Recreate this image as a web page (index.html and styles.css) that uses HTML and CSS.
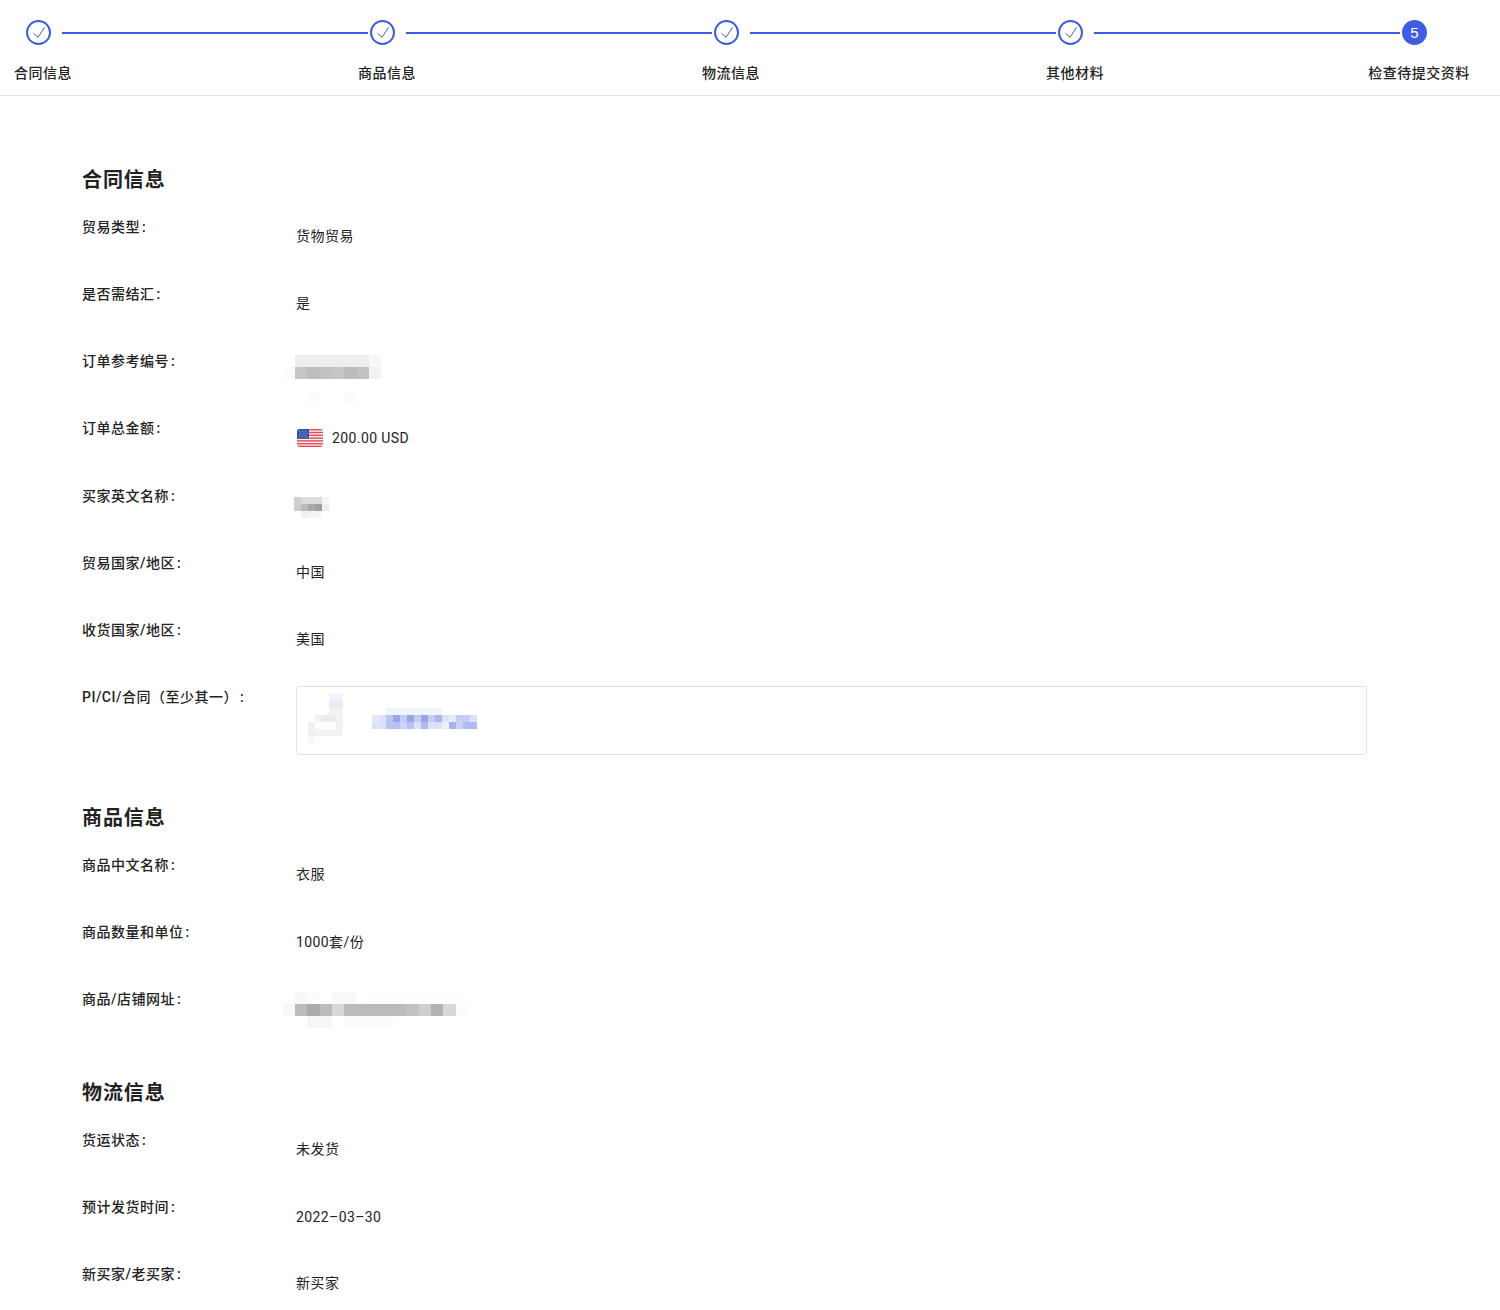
FILE: index.html
```html
<!DOCTYPE html>
<html lang="zh-CN">
<head>
<meta charset="utf-8">
<title>检查待提交资料</title>
<link rel="stylesheet" href="styles.css">
</head>
<body>
<header class="stepper">
  <div class="step">
    <div class="step-head">
      <svg class="step-icon" viewBox="0 0 25 25"><circle cx="12.5" cy="12.5" r="11.5" fill="none" stroke="#3f5ce3" stroke-width="2"/><path d="M7.5 13.3l4.5 4 6.5-10" fill="none" stroke="#3f5ce3" stroke-width="1"/></svg>
      <span class="step-line"></span>
    </div>
    <div class="step-label"><span>合同信息</span></div>
  </div>
  <div class="step">
    <div class="step-head">
      <svg class="step-icon" viewBox="0 0 25 25"><circle cx="12.5" cy="12.5" r="11.5" fill="none" stroke="#3f5ce3" stroke-width="2"/><path d="M7.5 13.3l4.5 4 6.5-10" fill="none" stroke="#3f5ce3" stroke-width="1"/></svg>
      <span class="step-line"></span>
    </div>
    <div class="step-label"><span>商品信息</span></div>
  </div>
  <div class="step">
    <div class="step-head">
      <svg class="step-icon" viewBox="0 0 25 25"><circle cx="12.5" cy="12.5" r="11.5" fill="none" stroke="#3f5ce3" stroke-width="2"/><path d="M7.5 13.3l4.5 4 6.5-10" fill="none" stroke="#3f5ce3" stroke-width="1"/></svg>
      <span class="step-line"></span>
    </div>
    <div class="step-label"><span>物流信息</span></div>
  </div>
  <div class="step">
    <div class="step-head">
      <svg class="step-icon" viewBox="0 0 25 25"><circle cx="12.5" cy="12.5" r="11.5" fill="none" stroke="#3f5ce3" stroke-width="2"/><path d="M7.5 13.3l4.5 4 6.5-10" fill="none" stroke="#3f5ce3" stroke-width="1"/></svg>
      <span class="step-line"></span>
    </div>
    <div class="step-label"><span>其他材料</span></div>
  </div>
  <div class="step step-last">
    <div class="step-head">
      <span class="step-num">5</span>
    </div>
    <div class="step-label"><span>检查待提交资料</span></div>
  </div>
</header>

<main class="page">
  <section class="section">
    <h2 class="section-title">合同信息</h2>
    <div class="row"><div class="label">贸易类型<span class="colon">:</span></div><div class="value">货物贸易</div></div>
    <div class="row"><div class="label">是否需结汇<span class="colon">:</span></div><div class="value">是</div></div>
    <div class="row"><div class="label">订单参考编号<span class="colon">:</span></div>
      <div class="value-blur">
        <svg class="mosaic mosaic-ref" viewBox="0 0 100 48">
          <rect x="12" y="0" width="74" height="12" fill="#eeeeee"/>
          <rect x="86" y="0" width="12" height="12" fill="#f8f8f8"/>
          <rect x="0" y="12" width="12" height="12" fill="#fbfbfb"/>
          <rect x="12" y="12" width="12" height="12" fill="#c6c6c6"/>
          <rect x="24" y="12" width="12" height="12" fill="#bdbdbd"/>
          <rect x="36" y="12" width="13" height="12" fill="#c2c2c2"/>
          <rect x="49" y="12" width="12" height="12" fill="#c6c6c6"/>
          <rect x="61" y="12" width="13" height="12" fill="#bcbcbc"/>
          <rect x="74" y="12" width="12" height="12" fill="#c2c2c2"/>
          <rect x="86" y="12" width="12" height="12" fill="#f2f2f2"/>
          <rect x="24" y="36" width="12" height="12" fill="#fcfcfc"/>
          <rect x="61" y="36" width="12" height="12" fill="#fcfcfc"/>
        </svg>
      </div>
    </div>
    <div class="row"><div class="label">订单总金额<span class="colon">:</span></div>
      <div class="value value-num value-amount">
        <svg class="flag" viewBox="0 0 26 18">
          <defs><clipPath id="flag-clip"><rect width="26" height="18" rx="3"/></clipPath></defs>
          <g clip-path="url(#flag-clip)">
            <rect width="26" height="18" fill="#f7f3f3"/>
            <g fill="#e3495a">
              <rect y="0" width="26" height="1.4"/><rect y="2.8" width="26" height="1.4"/><rect y="5.6" width="26" height="1.4"/><rect y="8.4" width="26" height="1.4"/><rect y="11.2" width="26" height="1.4"/><rect y="14" width="26" height="1.4"/><rect y="16.6" width="26" height="1.4"/>
            </g>
            <rect width="12" height="9.8" fill="#2f55a4"/>
            <g fill="#c9d4ee"><circle cx="2.5" cy="2" r=".5"/><circle cx="5.5" cy="2" r=".5"/><circle cx="8.5" cy="2" r=".5"/><circle cx="4" cy="4" r=".5"/><circle cx="7" cy="4" r=".5"/><circle cx="10" cy="4" r=".5"/><circle cx="2.5" cy="6" r=".5"/><circle cx="5.5" cy="6" r=".5"/><circle cx="8.5" cy="6" r=".5"/><circle cx="4" cy="8" r=".5"/><circle cx="7" cy="8" r=".5"/><circle cx="10" cy="8" r=".5"/></g>
          </g>
        </svg>
        <span>200.00 USD</span>
      </div>
    </div>
    <div class="row"><div class="label">买家英文名称<span class="colon">:</span></div>
      <div class="value-blur">
        <svg class="mosaic mosaic-buyer" viewBox="0 0 40 26">
          <rect x="0" y="0" width="7" height="7" fill="#d0d0d0"/>
          <rect x="7" y="0" width="21" height="7" fill="#dddddd"/>
          <rect x="28" y="0" width="7" height="7" fill="#f5f5f5"/>
          <rect x="0" y="7" width="7" height="7" fill="#cccccc"/>
          <rect x="7" y="7" width="7" height="7" fill="#bbbbbb"/>
          <rect x="14" y="7" width="7" height="7" fill="#aaaaaa"/>
          <rect x="21" y="7" width="7" height="7" fill="#a0a0a0"/>
          <rect x="28" y="7" width="7" height="7" fill="#eeeeee"/>
          <rect x="7" y="14" width="7" height="7" fill="#f0f0f0"/>
          <rect x="14" y="14" width="7" height="7" fill="#f4f4f4"/>
          <rect x="21" y="14" width="7" height="7" fill="#f7f7f7"/>
        </svg>
      </div>
    </div>
    <div class="row"><div class="label">贸易国家/地区<span class="colon">:</span></div><div class="value">中国</div></div>
    <div class="row"><div class="label">收货国家/地区<span class="colon">:</span></div><div class="value">美国</div></div>
    <div class="row"><div class="label">PI/CI/合同（至少其一）<span class="colon">:</span></div>
      <div class="file-box">
        <svg class="mosaic mosaic-file" viewBox="0 0 182 56">
          <g transform="translate(6 0)">
            <rect x="21" y="7" width="14" height="7" fill="#f1f3fb"/>
            <rect x="21" y="14" width="14" height="7" fill="#e8ecf8"/>
            <rect x="21" y="21" width="14" height="7" fill="#f3f2ee"/>
            <rect x="7" y="28" width="28" height="7" fill="#f2f2f2"/>
            <rect x="14" y="28" width="14" height="7" fill="#ececec"/>
            <rect x="0" y="35" width="7" height="14" fill="#f1f1f1"/>
            <rect x="7" y="42" width="21" height="7" fill="#f3f3f3"/>
            <rect x="28" y="35" width="7" height="14" fill="#f3f3f3"/>
            <rect x="0" y="49" width="7" height="7" fill="#f8f8f8"/>
          </g>
          <rect x="84" y="21" width="56" height="7" fill="#f3f5fd"/>
          <rect x="70" y="28" width="7" height="7" fill="#e5e8fa"/>
          <rect x="77" y="28" width="7" height="7" fill="#dde1f8"/>
          <rect x="84" y="28" width="7" height="7" fill="#bcc5f3"/>
          <rect x="91" y="28" width="7" height="7" fill="#98a4ec"/>
          <rect x="98" y="28" width="7" height="7" fill="#c5cdf5"/>
          <rect x="105" y="28" width="7" height="7" fill="#98a4ec"/>
          <rect x="112" y="28" width="7" height="7" fill="#c5cdf5"/>
          <rect x="119" y="28" width="7" height="7" fill="#98a4ec"/>
          <rect x="126" y="28" width="7" height="7" fill="#c5cdf5"/>
          <rect x="133" y="28" width="7" height="7" fill="#aab4f0"/>
          <rect x="140" y="28" width="7" height="7" fill="#dde1f8"/>
          <rect x="147" y="28" width="7" height="7" fill="#e8ebfb"/>
          <rect x="154" y="28" width="14" height="7" fill="#c5cdf5"/>
          <rect x="168" y="28" width="7" height="7" fill="#dde1f8"/>
          <rect x="70" y="35" width="14" height="7" fill="#dde1f8"/>
          <rect x="84" y="35" width="14" height="7" fill="#b8c1f2"/>
          <rect x="98" y="35" width="7" height="7" fill="#ccd2f6"/>
          <rect x="105" y="35" width="7" height="7" fill="#b8c1f2"/>
          <rect x="112" y="35" width="7" height="7" fill="#dde1f8"/>
          <rect x="119" y="35" width="7" height="7" fill="#b0baf0"/>
          <rect x="126" y="35" width="14" height="7" fill="#dde1f8"/>
          <rect x="140" y="35" width="7" height="7" fill="#eceefc"/>
          <rect x="147" y="35" width="7" height="7" fill="#a8b2ef"/>
          <rect x="154" y="35" width="7" height="7" fill="#ccd2f6"/>
          <rect x="161" y="35" width="14" height="7" fill="#b0baf0"/>
        </svg>
      </div>
    </div>
  </section>

  <section class="section">
    <h2 class="section-title">商品信息</h2>
    <div class="row"><div class="label">商品中文名称<span class="colon">:</span></div><div class="value">衣服</div></div>
    <div class="row"><div class="label">商品数量和单位<span class="colon">:</span></div><div class="value value-num">1000套/份</div></div>
    <div class="row"><div class="label">商品/店铺网址<span class="colon">:</span></div>
      <div class="value-blur">
        <svg class="mosaic mosaic-url" viewBox="0 0 200 36">
          <rect x="14" y="0" width="12" height="12" fill="#f8f8f8"/>
          <rect x="26" y="0" width="12" height="12" fill="#fcfcfc"/>
          <rect x="51" y="0" width="24" height="12" fill="#f9f9f9"/>
          <rect x="88" y="0" width="96" height="12" fill="#fdfdfd"/>
          <rect x="2" y="12" width="12" height="12" fill="#f8f8f8"/>
          <rect x="14" y="12" width="12" height="12" fill="#bcbcbc"/>
          <rect x="26" y="12" width="13" height="12" fill="#ababab"/>
          <rect x="39" y="12" width="12" height="12" fill="#bcbcbc"/>
          <rect x="51" y="12" width="12" height="12" fill="#d8d8d8"/>
          <rect x="63" y="12" width="62" height="12" fill="#bbbbbb"/>
          <rect x="125" y="12" width="13" height="12" fill="#c2c2c2"/>
          <rect x="138" y="12" width="12" height="12" fill="#cecece"/>
          <rect x="150" y="12" width="12" height="12" fill="#b2b2b2"/>
          <rect x="162" y="12" width="13" height="12" fill="#d8d8d8"/>
          <rect x="175" y="12" width="12" height="12" fill="#fcfcfc"/>
          <rect x="26" y="24" width="25" height="12" fill="#f6f6f6"/>
          <rect x="63" y="24" width="50" height="12" fill="#fcfcfc"/>
        </svg>
      </div>
    </div>
  </section>

  <section class="section">
    <h2 class="section-title">物流信息</h2>
    <div class="row"><div class="label">货运状态<span class="colon">:</span></div><div class="value">未发货</div></div>
    <div class="row"><div class="label">预计发货时间<span class="colon">:</span></div><div class="value value-num">2022–03–30</div></div>
    <div class="row"><div class="label">新买家/老买家<span class="colon">:</span></div><div class="value">新买家</div></div>
  </section>
</main>
</body>
</html>
```

FILE: styles.css
```css
* {
  box-sizing: border-box;
}

html,
body {
  margin: 0;
  height: 1310px;
  overflow: hidden;
}

body {
  background: #fff;
  color: #222;
  font-family: Roboto, "Noto Sans CJK SC", sans-serif;
  font-size: 14px;
  letter-spacing: 0.5px;
}

.stepper {
  display: flex;
  height: 96px;
  padding: 20px 0 0 26px;
  border-bottom: 1px solid #e4e4e4;
}

.step {
  width: 344px;
  flex: none;
}

.step-last {
  width: auto;
}

.step-head {
  display: flex;
  align-items: center;
  gap: 11px;
  height: 25px;
  padding-right: 2px;
}

.step-icon {
  width: 25px;
  height: 25px;
  flex: none;
}

.step-line {
  flex: 1;
  height: 2px;
  background: #3f5ce3;
}

.step-num {
  width: 25px;
  height: 25px;
  border-radius: 50%;
  background: #3f5ce3;
  color: #fff;
  font-family: "Liberation Sans", sans-serif;
  font-size: 15px;
  letter-spacing: 0;
  line-height: 25px;
  text-align: center;
}

.step-label {
  display: flex;
  justify-content: center;
  width: 34px;
  margin-top: 17px;
  font-weight: 500;
  line-height: 22px;
  white-space: nowrap;
}

.page {
  padding: 70px 0 0 82px;
}

.section {
  padding-bottom: 23.8px;
}

.section-title {
  margin: 0 0 22px;
  font-size: 20px;
  font-weight: 600;
  letter-spacing: 0.9px;
  line-height: 28px;
}

.row {
  display: grid;
  grid-template-columns: 214px 1071px;
  min-height: 44px;
  margin-bottom: 23.15px;
}

.label {
  font-weight: 500;
  line-height: 22px;
  white-space: nowrap;
}

.colon {
  margin-left: 2px;
}

.value {
  padding-top: 9px;
  line-height: 22px;
}

.value-num {
  padding-top: 10px;
  letter-spacing: 0.4px;
}

.value-amount {
  display: flex;
  align-self: start;
  align-items: center;
  gap: 9px;
  padding-left: 1px;
}

.flag {
  width: 26px;
  height: 18px;
}

.value-blur {
  height: 44px;
}

.mosaic {
  display: block;
  filter: blur(0.6px);
}

.mosaic-ref {
  width: 100px;
  height: 48px;
  margin: 5px 0 0 -13px;
}

.mosaic-buyer {
  width: 40px;
  height: 26px;
  margin: 12px 0 0 -2px;
}

.mosaic-url {
  width: 200px;
  height: 36px;
  margin: 4px 0 0 -15px;
}

.file-box {
  display: flex;
  align-items: flex-start;
  height: 69px;
  margin-bottom: 2px;
  padding-left: 5px;
  border: 1px solid #e2e2e2;
  border-radius: 3px;
}

.mosaic-file {
  width: 182px;
  height: 56px;
}
```
